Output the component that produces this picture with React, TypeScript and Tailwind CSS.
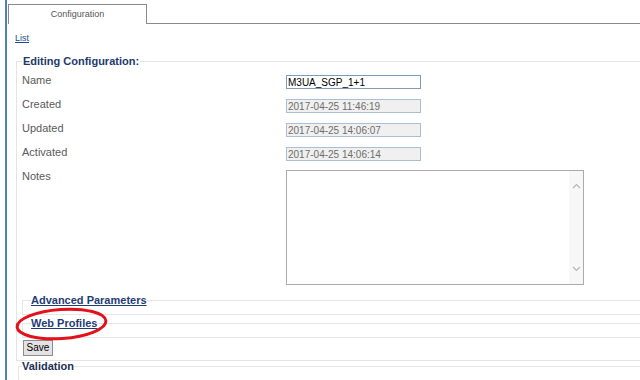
import React from "react"

const font = { fontFamily: '"Liberation Sans", Arial, sans-serif' }

const Row = ({ label, value, editable }: { label: string; value: string; editable?: boolean }) => {
    return (
        <div className="h-[24px] flex items-start">
            <div className="w-[264px] mt-[4px] text-[11px] leading-[13px] text-[#5a5a5a]">{label}</div>
            <input
                readOnly
                value={value}
                className={
                    editable
                        ? "mt-[5px] w-[135px] h-[14px] px-[1px] border border-[#7f9db9] bg-white text-[10px] leading-[12px] text-black outline-none"
                        : "mt-[5px] w-[135px] h-[14px] px-[1px] border border-[#a9bfd6] bg-[#f0f0f0] text-[10px] leading-[12px] text-[#6d6d6d] outline-none"
                }
            />
        </div>
    )
}

const App = () => {
    return (
        <div className="w-[640px] h-[380px] overflow-hidden bg-white flex" style={font}>
            <div className="w-[5px] shrink-0" />
            <div className="w-[2px] shrink-0 bg-[#4a84b5]" />
            <div className="w-[1px] shrink-0" />
            <div className="w-[700px] shrink-0 relative">
                {/* tab strip */}
                <div className="pt-[4px] flex items-end">
                    <div className="w-[139px] h-[20px] border-t border-l border-r border-[#8a8a8a] flex items-center justify-center text-[9px] text-[#555]">
                        Configuration
                    </div>
                    <div className="flex-1 border-b border-[#8a8a8a]" />
                </div>

                <div className="pl-[7px] pt-[9px] text-[9px] leading-[11px]">
                    <a href="#" className="text-[#1b4f8f] underline">List</a>
                </div>

                <fieldset className="ml-[8px] mt-[11px] border border-[#e4e4e4] pl-[5px] pr-0 pb-[4px]">
                    <legend className="ml-0 px-[1px] text-[11px] leading-[13px] font-bold text-[#1d3a6b]">
                        Editing Configuration:
                    </legend>
                    <div className="pt-[2px]">
                        <Row label="Name" value="M3UA_SGP_1+1" editable />
                        <Row label="Created" value="2017-04-25 11:46:19" />
                        <Row label="Updated" value="2017-04-25 14:06:07" />
                        <Row label="Activated" value="2017-04-25 14:06:14" />
                        <div className="flex items-start">
                            <div className="w-[264px] mt-[4px] text-[11px] leading-[13px] text-[#5a5a5a]">Notes</div>
                            <div className="mt-[4px] w-[298px] h-[115px] border border-[#ababab] bg-white flex justify-end">
                                <div className="w-[14px] h-full bg-[#f7f7f7] flex flex-col items-center justify-between py-[12px]">
                                    <svg width="9" height="6" viewBox="0 0 9 6" fill="none" stroke="#b5b5b5" strokeWidth="1.2">
                                        <path d="M1 5 L4.5 1.5 L8 5" />
                                    </svg>
                                    <svg width="9" height="6" viewBox="0 0 9 6" fill="none" stroke="#b5b5b5" strokeWidth="1.2">
                                        <path d="M1 1 L4.5 4.5 L8 1" />
                                    </svg>
                                </div>
                            </div>
                        </div>
                    </div>

                    <fieldset className="mt-[9px] border border-[#e6e6e6] p-0">
                        <legend className="ml-[8px] px-0 text-[11px] leading-[13px] font-bold text-[#1f3d74] underline">
                            Advanced Parameters
                        </legend>
                        <div className="h-[7px]" />
                    </fieldset>

                    <fieldset className="mt-[2px] border border-[#e6e6e6] p-0">
                        <legend className="ml-[8px] px-0 text-[11px] leading-[13px] font-bold text-[#1f3d74] underline">
                            Web Profiles
                        </legend>
                        <div className="h-[7px]" />
                    </fieldset>

                    <button className="mt-[2px] ml-[1px] w-[30px] h-[16px] border border-[#8d8d8d] bg-[#e3e3e3] text-[10px] leading-[12px] text-black flex items-center justify-center">
                        Save
                    </button>
                </fieldset>

                <fieldset className="ml-[10px] border border-[#e6e6e6] p-0 h-[40px]">
                    <legend className="ml-[3px] px-0 text-[11px] leading-[11px] font-bold text-[#1d2f55]">
                        Validation
                    </legend>
                </fieldset>

                {/* highlight drawn over the page */}
                <svg className="absolute left-0 top-0 pointer-events-none" width="640" height="380">
                    <ellipse cx="53.5" cy="324" rx="44.5" ry="14.5" fill="none" stroke="#e3111b" strokeWidth="3" transform="rotate(-4 53.5 324)" />
                </svg>
            </div>
        </div>
    )
}

export default App
